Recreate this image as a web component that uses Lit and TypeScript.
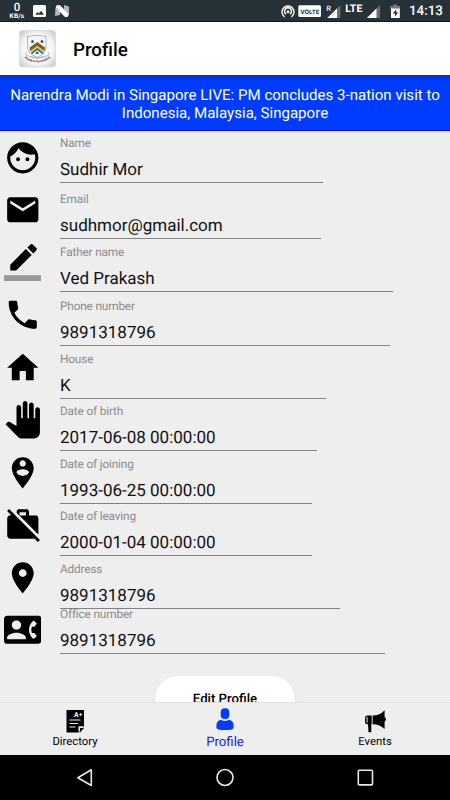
import { LitElement, html, svg, css } from "lit";
import { customElement } from "lit/decorators.js";

const icons: Record<string, unknown> = {
  face: svg`<path d="M9 11.750c-.69 0-1.250.56-1.250 1.250s.56 1.250 1.250 1.250 1.250-.56 1.250-1.250-.56-1.250-1.250-1.250zm6 0c-.69 0-1.250.56-1.250 1.250s.56 1.250 1.250 1.250 1.250-.56 1.250-1.250-.56-1.250-1.250-1.250zM12 2C6.480 2 2 6.480 2 12s4.480 10 10 10 10-4.480 10-10S17.520 2 12 2zm0 18c-4.410 0-8-3.590-8-8 0-.29.02-.58.05-.86 2.360-1.050 4.230-2.980 5.210-5.370C11.070 8.330 14.050 10 17.420 10c.78 0 1.530-.09 2.250-.26.21.71.33 1.470.33 2.260 0 4.410-3.590 8-8 8z"/>`,
  mail: svg`<path d="M20 4H4c-1.100 0-1.990.9-1.990 2L2 18c0 1.100.9 2 2 2h16c1.100 0 2-.9 2-2V6c0-1.100-.9-2-2-2zm0 4l-8 5-8-5V6l8 5 8-5v2z"/>`,
  edit: svg`<path d="M17.750 7L14 3.250l-10 10V17h3.750l10-10zm2.960-2.960c.39-.39.39-1.020 0-1.410L18.370.29c-.39-.39-1.020-.39-1.410 0L15 2.250 18.750 6l1.960-1.960z"/><path class="dim" d="M0 20h24v4H0z"/>`,
  phone: svg`<path d="M6.620 10.790c1.440 2.830 3.760 5.140 6.590 6.590l2.200-2.200c.27-.27.67-.36 1.020-.24 1.120.37 2.330.57 3.570.57.55 0 1 .45 1 1V20c0 .55-.45 1-1 1-9.390 0-17-7.610-17-17 0-.55.45-1 1-1h3.500c.55 0 1 .45 1 1 0 1.250.2 2.450.57 3.570.11.35.03.74-.25 1.020l-2.200 2.200z"/>`,
  home: svg`<path d="M10 20v-6h4v6h5v-8h3L12 3 2 12h3v8z"/>`,
  hand: svg`<path d="M23 5.500V20c0 2.200-1.800 4-4 4h-7.300c-1.080 0-2.100-.43-2.850-1.190L1 14.830s1.260-1.230 1.300-1.250c.22-.19.49-.29.79-.29.22 0 .42.06.6.160.04.01 4.310 2.460 4.310 2.460V4c0-.83.67-1.500 1.500-1.500S11 3.170 11 4v7h1V1.500c0-.83.67-1.500 1.500-1.500S15 .67 15 1.500V11h1V2.500c0-.83.67-1.500 1.500-1.500s1.500.67 1.500 1.500V11h1V5.500c0-.83.67-1.500 1.500-1.500s1.500.67 1.500 1.500z"/>`,
  personPin: svg`<path d="M12 2C8.140 2 5 5.140 5 9c0 5.250 7 13 7 13s7-7.750 7-13c0-3.860-3.140-7-7-7zm0 2c1.100 0 2 .9 2 2 0 1.110-.9 2-2 2s-2-.89-2-2c0-1.100.9-2 2-2zm0 10c-1.670 0-3.140-.85-4-2.150.02-1.320 2.670-2.050 4-2.050s3.980.73 4 2.050c-.86 1.300-2.330 2.150-4 2.150z"/>`,
  workOff: svg`<path d="M23 21.740l-1.460-1.460L7.210 5.950 3.250 1.990 1.990 3.250l2.700 2.700h-.64c-1.110 0-1.990.89-1.990 2l-.01 11c0 1.110.89 2 2 2h15.640L21.740 23 23 21.740zM22 7.950c.05-1.110-.84-2-1.950-1.950h-4V3.950c0-1.110-.89-2-2-1.950h-4c-1.110-.05-2 .84-2 1.950v.32l13.950 14V7.950zM14.050 6H10V3.950h4.050V6z"/>`,
  place: svg`<path d="M12 2C8.130 2 5 5.130 5 9c0 5.250 7 13 7 13s7-7.750 7-13c0-3.870-3.130-7-7-7zm0 9.500c-1.380 0-2.500-1.120-2.500-2.500s1.120-2.500 2.500-2.500 2.500 1.120 2.500 2.500-1.120 2.500-2.500 2.500z"/>`,
  contact: svg`<path d="M22 3H2C.9 3 0 3.900 0 5v14c0 1.100.9 2 2 2h20c1.100 0 1.990-.9 1.990-2L24 5c0-1.100-.9-2-2-2zM8 6c1.660 0 3 1.340 3 3s-1.340 3-3 3-3-1.340-3-3 1.340-3 3-3zm6 12H2v-1c0-2 4-3.100 6-3.100s6 1.100 6 3.100v1zm3.850-4h1.640L21 16l-1.990 1.990c-1.310-.98-2.280-2.380-2.730-3.990-.18-.64-.28-1.310-.28-2s.1-1.360.28-2c.45-1.620 1.420-3.010 2.730-3.990L21 8l-1.510 2h-1.640c-.22.63-.35 1.300-.35 2s.13 1.370.35 2z"/>`,
};

const iconOrder = ["face", "mail", "edit", "phone", "home", "hand", "personPin", "workOff", "place", "contact"];

const fields = [
  { label: "Name", value: "Sudhir Mor", height: 51.5, width: 262.5 },
  { label: "Email", value: "sudhmor@gmail.com", height: 56, width: 261 },
  { label: "Father name", value: "Ved Prakash", height: 53.5, width: 333 },
  { label: "Phone number", value: "9891318796", height: 53.5, width: 330 },
  { label: "House", value: "K", height: 53, width: 266 },
  { label: "Date of birth", value: "2017-06-08 00:00:00", height: 52.5, width: 257 },
  { label: "Date of joining", value: "1993-06-25 00:00:00", height: 52.5, width: 252 },
  { label: "Date of leaving", value: "2000-01-04 00:00:00", height: 52.5, width: 252 },
  { label: "Address", value: "9891318796", height: 52.5, width: 280 },
  { label: "Office number", value: "9891318796", height: 45.5, width: 325 },
];

@customElement("status-bar")
class StatusBar extends LitElement {
  static styles = css`
    :host { display: flex; height: 22px; box-sizing: border-box; background: #263238; border-bottom: 1px solid #10181c; color: #fff; font-family: Roboto, sans-serif; text-rendering: geometricPrecision; }
    .left { display: flex; padding-left: 8px; }
    .speed { width: 18px; display: flex; flex-direction: column; align-items: center; padding-top: 2px; box-sizing: border-box; }
    .num { font-size: 11.500px; line-height: 11px; font-weight: 500; }
    .unit { font-size: 6.500px; line-height: 7px; font-weight: 700; letter-spacing: 0.2px; }
    .right { display: flex; margin-left: auto; }
    svg { display: block; }
    .time { font-size: 13.400px; line-height: 23px; font-weight: 500; margin-left: 7px; width: 41px; }
    .volte { font: 700 6px Inter, sans-serif; fill: #263238; }
    .roam { font: 700 7.500px Roboto, sans-serif; fill: #ddd; }
    .lte { font: 700 10.500px Roboto, sans-serif; }
  `;
  render() {
    return html`
      <div class="left">
        <div class="speed"><span class="num">0</span><span class="unit">KB/s</span></div>
        <svg width="50" height="21" fill="#fff">
          <path fill-rule="evenodd" d="M8.500 5h10q1.500 0 1.500 1.500v9q0 1.500-1.500 1.500h-10Q7 17 7 15.500v-9Q7 5 8.500 5zM9.200 14.700h8.800l-2.900-3.900-2.200 2.800-1.500-1.700z"/>
          <path d="M29.500 7.500l4.500 4V15l-5 1zM38 5l5 1.500V14.500L38 9.500z" opacity=".65"/>
          <path d="M30.500 5.200h3.500l9 9-1.500 2.800h-2.500L29.800 7.800z"/>
        </svg>
      </div>
      <div class="right">
        <svg width="122" height="21" fill="#fff">
          <g fill="none" stroke="#fff" stroke-width="1.400"><path d="M4.600 16.900a6 6 0 1 1 6.800 0M6.100 14.200a3.500 3.500 0 1 1 3.800 0"/></g>
          <circle cx="8" cy="11.800" r="1.500"/>
          <rect x="18.300" y="5.300" width="22.700" height="11.700" rx="1.500"/>
          <text class="volte" x="20.300" y="13.500" textLength="19" lengthAdjust="spacingAndGlyphs">VOLTE</text>
          <text class="roam" x="46.300" y="11">R</text>
          <path d="M60.300 5L47.300 18h13z" opacity=".3"/><path d="M57 8.500L47.300 18H57z"/>
          <text class="lte" x="65.300" y="12" textLength="17">LTE</text>
          <path d="M100 5L87 18h13z" opacity=".3"/><path d="M96.500 8.500L87 18h9.500z"/>
          <path d="M113 4.500h4V6h3v3h-10V6h3z" opacity=".35"/>
          <path fill-rule="evenodd" d="M111 8.500h8.800V18H111zM116.500 9l-3.800 4.600h2.300v3.200l3.200-4.500H116z"/>
        </svg>
        <span class="time">14:13</span>
      </div>`;
  }
}

@customElement("profile-form")
class ProfileForm extends LitElement {
  static styles = css`
    :host { display: flex; height: 571px; overflow: hidden; background: #eee; flex-wrap: wrap; align-content: flex-start; text-rendering: geometricPrecision; }
    .icons { width: 60px; display: flex; flex-direction: column; }
    .cell { height: 52.500px; width: 45px; display: flex; align-items: center; justify-content: center; }
    .cell svg { width: 37.500px; height: 37.500px; }
    .dim { opacity: 0.36; }
    .fields { width: 390px; height: 525px; }
    .row { display: flex; flex-direction: column; justify-content: flex-end; box-sizing: border-box; white-space: nowrap; }
    .label { font-size: 11.800px; line-height: 14px; color: #8b8b8b; letter-spacing: -0.150px; flex-shrink: 0; }
    .value { font-size: 17px; line-height: 20px; margin-top: 10px; height: 22px; color: #111; border-bottom: 1px solid #828282; flex-shrink: 0; }
    .row:last-child .value { height: 22.500px; margin-top: 9.500px; }
    .edit { box-sizing: border-box; margin: 20px auto 0; width: 140px; height: 46px; border-radius: 23px; background: #fff; text-align: center; font-size: 13.200px; font-weight: 500; line-height: 47px; color: #000; box-shadow: 0 1px 2px #0002; }
  `;
  render() {
    return html`
      <div class="icons">
        ${iconOrder.map((n) => html`<div class="cell"><svg viewBox="0 0 24 24">${icons[n]}</svg></div>`)}
      </div>
      <div class="fields">
        ${fields.map((f) => html`<div class="row" style="height:${f.height}px;width:${f.width}px"><span class="label">${f.label}</span><span class="value">${f.value}</span></div>`)}
      </div>
      <div class="edit">Edit Profile</div>`;
  }
}

@customElement("app-root")
class AppRoot extends LitElement {
  static styles = css`
    :host { display: flex; flex-direction: column; height: 800px; width: 450px; overflow: hidden; font-family: Roboto, sans-serif; background: #eee; text-rendering: geometricPrecision; }
    .header { height: 53px; background: #fff; display: flex; align-items: center; }
    .header svg { margin-left: 19px; }
    .title { margin: 2px 0 0 17px; font-size: 18.750px; font-weight: 500; color: #000; }
    .banner { height: 56px; box-sizing: border-box; padding-top: 12px; background: linear-gradient(#0030d0, #003cff 6px); border-bottom: 1px solid #0000f0; color: #fff; text-align: center; font-size: 15.070px; line-height: 17.500px; white-space: nowrap; }
    .tabs { height: 53px; display: grid; grid-template-columns: repeat(3, 1fr); background: #eee; box-sizing: border-box; border-top: 1px solid #e2e2e2; }
    .tab { display: flex; flex-direction: column; align-items: center; font-size: 11.300px; line-height: 15px; color: #000; padding-top: 5px; }
    .tab svg { height: 26px; width: 26px; display: block; }
    .active { font-size: 13.200px; color: #0a20ff; line-height: 17px; }
    .nav { height: 45px; background: #000; }
    .nav svg { display: block; }
    .grade { font: 800 6.500px Inter, sans-serif; fill: #eee; }
    .motto { font: 700 3px Roboto, sans-serif; fill: #333; }
  `;
  render() {
    return html`
      <status-bar></status-bar>
      <div class="header">
        <svg width="37" height="38" viewBox="0 0 37 38">
          <defs><radialGradient id="g" r=".68"><stop offset=".6" stop-color="#f8f8f8"/><stop offset="1" stop-color="#c4c6c5"/></radialGradient></defs>
          <rect x=".5" y=".5" width="36" height="36.500" rx="3" fill="url(#g)" stroke="#d3e2df"/>
          <path d="M8.500 6q4 1 5.500-.5h8.500Q24 7 27 6v12q-1 6-9 9.500-8.500-3.500-9.500-9.500z" fill="#f6f6f6" stroke="#999" stroke-width=".7"/>
          <circle cx="13.500" cy="11.500" r="1.500" fill="#555"/><circle cx="23" cy="11.500" r="1.500" fill="#555"/>
          <g fill="none" stroke-width="2"><path d="M11 18.500l7.300-5.200 7.300 5.200" stroke="#138b3c"/><path d="M11 20.300l7.300-5.200 7.300 5.200" stroke="#e02a1b"/><path d="M11.500 22l6.800-5 6.800 5" stroke="#f5d31a"/><path d="M12.500 23.500l5.800-4.500 5.800 4.500" stroke="#1684c4"/></g>
          <path d="M17 22h2.500v2H17z" fill="#555"/>
          <path d="M8 22q-2 1-1 3 11 6 23 0 1-2-1-3M12 26.500q6 3 13 0" fill="none" stroke="#aaa" stroke-width=".8"/>
          <path id="m" d="M5.500 28q13 9 26.500-.5" fill="none"/>
          <text class="motto"><textPath href="#m" textLength="28">Ready to Accomplish</textPath></text>
        </svg>
        <span class="title">Profile</span>
      </div>
      <div class="banner">Narendra Modi in Singapore LIVE: PM concludes 3-nation visit to<br>Indonesia, Malaysia, Singapore</div>
      <profile-form></profile-form>
      <div class="tabs">
        <div class="tab">
          <svg viewBox="0 0 26 26"><path d="M4.500 2H22v16.500L17 24.500H4.500z"/><path d="M16.500 24.500v-6.200H22z" fill="#eee"/><path d="M18 24.500v-4.500h4z"/><path d="M7.500 12h11M7.500 15.500h8.500M7.500 19h6" stroke="#eee" stroke-width="1.200"/><text class="grade" x="12" y="9" textLength="8.500" lengthAdjust="spacingAndGlyphs">A+</text></svg>
          Directory
        </div>
        <div class="tab active">
          <svg viewBox="0 0 26 26" fill="#003cff"><rect x="8.700" y=".3" width="8.600" height="10.700" rx="4"/><path d="M9 11.700q4 2.400 8 0 4.600 1 4.600 5.500v2.300q0 2.600-8.600 2.600t-8.600-2.600v-2.300q0-4.500 4.600-5.500z"/></svg>
          Profile
        </div>
        <div class="tab">
          <svg viewBox="0 0 26 26"><path d="M3 10q0-2.300 2-2.500h4.700v8.700H5q-2 0-2-2.500z"/><path d="M5 8.800v6" stroke="#eee" stroke-width="1"/><path d="M6 16h3.300v8.300H6.500zM10.600 7.500q7.400 0 12-5.200v6.800q1.400.8 1.400 2.200t-1.400 2.200v7.500q-4.600-4.800-12-4.800z"/></svg>
          Events
        </div>
      </div>
      <div class="nav">
        <svg width="450" height="45" fill="none" stroke="#e8e8e8" stroke-width="1.600"><path d="M91.300 14.800v15.700l-13.400-7.800z" stroke-linejoin="round"/><circle cx="225" cy="22.500" r="8"/><rect x="358.300" y="15.300" width="14.200" height="14.600" rx="1"/></svg>
      </div>`;
  }
}
